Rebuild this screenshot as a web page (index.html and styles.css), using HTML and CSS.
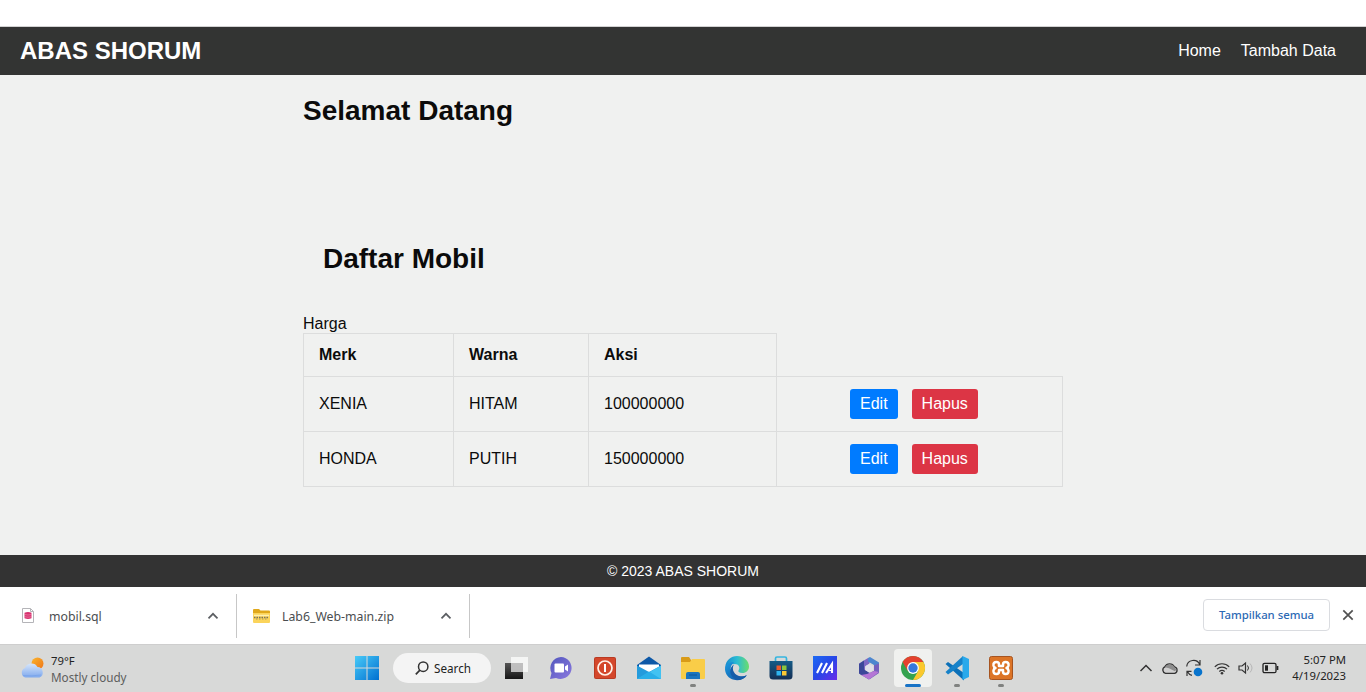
FILE: index.html
```html
<!DOCTYPE html>
<html lang="id">
<head>
<meta charset="utf-8">
<title>ABAS SHORUM</title>
<link rel="stylesheet" href="styles.css">
</head>
<body>
<div class="browser-edge"></div>
<header class="site-header">
  <div class="brand">ABAS SHORUM</div>
  <nav class="nav"><a>Home</a><a>Tambah Data</a></nav>
</header>
<main class="content">
  <h1 class="title">Selamat Datang</h1>
  <h2 class="subtitle">Daftar Mobil</h2>
  <div class="stray">Harga</div>
  <table class="cars">
    <colgroup><col class="c1"><col class="c2"><col class="c3"><col class="c4"></colgroup>
    <tr class="head"><th>Merk</th><th>Warna</th><th>Aksi</th></tr>
    <tr><td>XENIA</td><td>HITAM</td><td>100000000</td><td><div class="actions"><a class="btn edit">Edit</a><a class="btn delete">Hapus</a></div></td></tr>
    <tr><td>HONDA</td><td>PUTIH</td><td>150000000</td><td><div class="actions"><a class="btn edit">Edit</a><a class="btn delete">Hapus</a></div></td></tr>
  </table>
</main>
<footer class="site-footer">© 2023 ABAS SHORUM</footer>

<section class="downloads">
  <div class="download first">
    <svg class="file" width="12" height="15" viewBox="0 0 12 15"><path d="M.5.5h8l3 3v11H.5z" fill="#fff" stroke="#b4b4b8"/><path d="M8.500.500v3h3" fill="none" stroke="#b4b4b8"/><path d="M2.500 4.700q3.500-1.200 7 0v5.600q-3.500 1.200-7 0z" fill="#d8326f"/><path d="M2.500 6.500q3.500 1 7 0M2.500 8.700q3.500 1 7 0" fill="none" stroke="#f3a9c3" stroke-width=".5"/></svg>
    <span class="fname sql">mobil.sql</span>
    <svg class="caret" width="12" height="8" viewBox="0 0 12 8"><path d="M1.500 6.300 6 1.800l4.500 4.500" fill="none" stroke="#5b5e62" stroke-width="1.700"/></svg>
  </div>
  <div class="download second">
    <svg class="zip" width="17" height="14" viewBox="0 0 17 14"><path d="M0 1q0-1 1-1h5l1.500 1.500H16q1 0 1 1V5H0z" fill="#e0a81c"/><path d="M0 4h17v9q0 1-1 1H1q-1 0-1-1z" fill="#fbd45b"/><path d="M1 6.500h15" stroke="#fff0b0" stroke-width="1.500"/><path d="M1 8.500h15" stroke="#77735e" stroke-width="1.500" stroke-dasharray="1.500 1"/><path d="M3 10h12" stroke="#aa9855" stroke-dasharray="1.500 1.500"/></svg>
    <span class="fname zipname">Lab6_Web-main.zip</span>
    <svg class="caret" width="12" height="8" viewBox="0 0 12 8"><path d="M1.500 6.300 6 1.800l4.500 4.500" fill="none" stroke="#5b5e62" stroke-width="1.700"/></svg>
  </div>
  <div class="show-all"><span>Tampilkan semua</span></div>
  <svg class="close" width="12" height="12" viewBox="0 0 12 12"><path d="m1.300 1.300 9.400 9.400m0-9.400-9.400 9.400" stroke="#515151" stroke-width="1.700"/></svg>
</section>

<section class="taskbar">
  <div class="weather">
    <svg width="25" height="22" viewBox="0 0 25 22"><defs><linearGradient id="sun" x2="1" y2="1"><stop stop-color="#fbb52d"/><stop offset="1" stop-color="#ee7418"/></linearGradient><linearGradient id="cloud" x2="0" y2="1"><stop stop-color="#d5e5fb"/><stop offset="1" stop-color="#7fa9ed"/></linearGradient></defs><circle cx="17.500" cy="6.500" r="6" fill="url(#sun)"/><path d="M5.500 20.500A5 5 0 0 1 5 11a7 7 0 0 1 12.500-1 5.500 5.500 0 0 1 2 10.500z" fill="url(#cloud)"/><path d="M3 18.500q8 1 18-.5" stroke="#6c9ae8" fill="none" opacity=".5"/></svg>
    <div class="wtext"><span class="temp">79°F</span><span class="sky">Mostly cloudy</span></div>
  </div>
  <div class="start"><svg width="24" height="24" viewBox="0 0 24 24"><defs><linearGradient id="win" x2="1" y2="1"><stop stop-color="#48cbf8"/><stop offset="1" stop-color="#006fd0"/></linearGradient></defs><path d="M0 0h11.500v11.500H0zM12.500 0H24v11.500H12.500zM0 12.500h11.500V24H0zM12.500 12.500H24V24H12.500z" fill="url(#win)"/></svg></div>
  <div class="search"><svg width="14" height="14" viewBox="0 0 14 14"><circle cx="8.200" cy="5.700" r="4.700" fill="none" stroke="#333" stroke-width="1.500"/><path d="M4.900 9.200.8 13.300" stroke="#333" stroke-width="1.700"/></svg><span>Search</span></div>
  <div class="apps">
    <div class="app"><svg width="26" height="26" viewBox="0 0 26 26"><defs><linearGradient id="tv" x2="0" y2="1"><stop stop-color="#555"/><stop offset="1" stop-color="#161616"/></linearGradient></defs><path d="M1 8h18v16H1z" fill="url(#tv)"/><path d="M7 2h17v15H7z" fill="#fff" opacity=".72"/><path d="M7 8h12v9H7z" fill="#b9b9b9" opacity=".75"/></svg></div>
    <div class="app"><svg width="26" height="26" viewBox="0 0 26 26"><defs><linearGradient id="chat" x2="1" y2="1"><stop stop-color="#5156bd"/><stop offset="1" stop-color="#8b79df"/></linearGradient></defs><path d="M13 2a11 11 0 1 1-5 21l-6 1 1.500-6A11 11 0 0 1 13 2z" fill="url(#chat)"/><rect x="6.500" y="8.500" width="9.500" height="9" rx="1" fill="#fff"/><path d="m17 11.500 3-2v7l-3-2z" fill="#fff"/></svg></div>
    <div class="app"><svg width="26" height="26" viewBox="0 0 26 26"><rect x="2" y="2" width="22" height="22" rx="2" fill="#b93a22"/><rect x="3" y="3" width="20" height="20" rx="1" fill="#d4472b"/><circle cx="13" cy="13" r="7" fill="none" stroke="#fff1e8" stroke-width="1.700"/><path d="M13 9v8" stroke="#fff" stroke-width="2"/></svg></div>
    <div class="app"><svg width="26" height="26" viewBox="0 0 26 26"><path d="M1 10 13 1.500 25 10v8H1z" fill="#0c58a7"/><path d="M3 9.500h20V18H3z" fill="#fff"/><path d="M1 10.500 13 17l12-6.500V24H1z" fill="#249bdc"/><path d="M25 10.500 7 21l-6 3h24z" fill="#42c2f2"/><path d="m1 24 12-7.500L25 24z" fill="#2aaee8"/></svg></div>
    <div class="app running"><svg width="26" height="26" viewBox="0 0 26 26"><path d="M1 3q0-1 1-1h7l2 3v5H1z" fill="#d99b18"/><path d="M1 7h9l2-3h12q1 0 1 1v18q0 1-1 1H2q-1 0-1-1z" fill="#f9cd48"/><path d="M6 24v-5q0-2 2-2h10q2 0 2 2v5z" fill="#1b75bf"/><path d="M9 20h8" stroke="#0e579a"/></svg></div>
    <div class="app"><svg width="26" height="26" viewBox="0 0 26 26"><defs><linearGradient id="edge" x2="1" y2="0"><stop stop-color="#168acf"/><stop offset=".5" stop-color="#2bbcd3"/><stop offset="1" stop-color="#6bdd6c"/></linearGradient><linearGradient id="edge2" x2="1" y2="1"><stop stop-color="#1c9ae0"/><stop offset="1" stop-color="#0c4f9e"/></linearGradient></defs><path d="M1.200 12C2 5 7 1 13 1c7 0 12 5 12 10.500 0 4-3 6.500-6.500 6.500-3 0-4.700-1-4-2.500 2-3 .5-6.500-4-6.500-4 0-8 2-9.300 6z" fill="url(#edge)"/><path d="M1 14c1-5 5-7.500 9-6.500-3 2-4 5-3 8.500 1.400 5 8 7.500 15.500 4.500-3 4-8 5.500-12.500 4.300C4.500 23.500 1 19 1 14z" fill="url(#edge2)"/><path d="M10.500 9c-3 3-2 10 4.500 12 3 .8 6 .2 8-1-2 3.500-6 5.300-10 5C5 22 4 13 10.500 9z" fill="#145da9"/></svg></div>
    <div class="app"><svg width="26" height="26" viewBox="0 0 26 26"><defs><linearGradient id="store" x2="0" y2="1"><stop stop-color="#155b86"/><stop offset="1" stop-color="#142f55"/></linearGradient></defs><path d="M7.500 7V3.500q0-1.500 1.500-1.500h8q1.500 0 1.500 1.500V7" fill="none" stroke="#35b5df" stroke-width="1.700"/><path d="M1.500 6h23v15q0 3.500-3.500 3.500H5q-3.500 0-3.500-3.500z" fill="url(#store)"/><path d="M8.500 10.500H13V15H8.500z" fill="#ed5a2c"/><path d="M14 10.500h4.500V15H14z" fill="#8bc53d"/><path d="M8.500 16H13v4.500H8.500z" fill="#2eb4ef"/><path d="M14 16h4.500v4.500H14z" fill="#fbc934"/></svg></div>
    <div class="app"><svg width="26" height="26" viewBox="0 0 26 26"><defs><linearGradient id="my" x2="1" y2="1"><stop stop-color="#1c6bf4"/><stop offset=".5" stop-color="#2846e7"/><stop offset="1" stop-color="#6b2ce9"/></linearGradient></defs><path d="M1 1h24v24H1z" fill="url(#my)"/><path d="m5 18 5-10M10 18l5-10M14 18l6-9v9" stroke="#fff" stroke-width="2.100" fill="none"/><path d="M17 15.500h3" stroke="#fff"/></svg></div>
    <div class="app"><svg width="26" height="26" viewBox="0 0 26 26"><path d="M3 8.500 12 3l3 1-2 5-4 2.500v6L5 20l-2-2z" fill="#7d67c4"/><path d="m12 3 2-1 9 5.500V15l-5-2v-3l-6-3.500z" fill="#4c86cf"/><path d="M23 8.500V18l-9 6-5-2.500 9-5.500v-5.500z" fill="#7660bd"/><path d="m3 9 5-3.500v9L14 18l4-2v3l-5 5.500L3 18.500z" fill="#3c4799"/><path d="m5 20 6-1 7-3 5 1-10 7.500z" fill="#b576d5"/><path d="m9.500 11 3.500-2 4 2v4l-4 2.500L9.500 15z" fill="#e1dfeb"/></svg></div>
    <div class="app active"><svg width="26" height="26" viewBox="0 0 26 26"><circle cx="13" cy="13" r="12" fill="#34a24f"/><path d="M2.600 7A12 12 0 0 1 23.400 7H13l-5.200 9z" fill="#e4412f"/><path d="M23.400 7A12 12 0 0 1 13 25l5.200-9L13 7z" fill="#fbc82e"/><circle cx="13" cy="13" r="5.900" fill="#fff"/><circle cx="13" cy="13" r="4.700" fill="#3577dc"/></svg></div>
    <div class="app running"><svg width="26" height="26" viewBox="0 0 26 26"><path d="m1.500 9 2.500-2L20 18v7.500z" fill="#0b70b8"/><path d="M19 1v8L4 19.500 1.500 17z" fill="#1682c9"/><path d="m18.500 1 6.500 3v18l-6.500 3z" fill="#2aa9eb"/></svg></div>
    <div class="app running"><svg width="26" height="26" viewBox="0 0 26 26"><rect x="1.500" y="1.500" width="23" height="23" rx="2" fill="#dc7426" stroke="#a65420"/><path d="M8.500 7q-3.500 0-3 3.500.3 1.800 2 2.500-1.700.7-2 2.500-.5 3.500 3 3.500 2.500 0 2.500-2.500V15h4v1.500q0 2.500 2.500 2.500 3.500 0 3-3.500-.3-1.800-2-2.500 1.700-.7 2-2.500.5-3.500-3-3.500Q15 7 15 9.500V11h-4V9.500Q11 7 8.500 7z" fill="none" stroke="#fff" stroke-width="2.500" stroke-linejoin="round"/></svg></div>
  </div>
  <div class="tray">
    <svg class="up" width="14" height="8" viewBox="0 0 14 8"><path d="m1.500 7 5.500-5.500L12.500 7" fill="none" stroke="#333" stroke-width="1.500"/></svg>
    <svg class="onedrive" width="18" height="13" viewBox="0 0 18 13"><path d="M4.500 11.300a3.400 3.400 0 0 1-.7-6.400 5.300 5.300 0 0 1 9.600 0 3.300 3.300 0 0 1 .3 6.400z" fill="#d0d0d0" stroke="#333" stroke-width="1.300"/><path d="M4 5.300a5.300 5.300 0 0 1 9.500 0l2 2-1.500 2-6-3z" fill="#8d8d8d"/></svg>
    <svg class="sync" width="18" height="18" viewBox="0 0 18 18"><path d="M1.700 7.500a6.800 6.800 0 0 1 13-2M15 1v5h-5M7 16.300a6.500 6.500 0 0 1-4.500-3.500M2 17v-4.700h4.500" fill="none" stroke="#333" stroke-width="1.200"/><circle cx="13" cy="13" r="4.300" fill="#0874cd"/></svg>
    <svg class="wifi" width="16" height="13" viewBox="0 0 16 13"><path d="M.8 4.800a10 10 0 0 1 14.400 0M3 7.200a7 7 0 0 1 10 0M5.300 9.500a4 4 0 0 1 5.400 0" fill="none" stroke="#333" stroke-width="1.200"/><circle cx="8" cy="11.300" r="1.300" fill="#333"/></svg>
    <svg class="sound" width="17" height="14" viewBox="0 0 17 14"><path d="M1 5h3l3.500-3v10L4 9H1z" fill="none" stroke="#333" stroke-width="1.200"/><path d="M9.500 4.500q2 2.500 0 5" fill="none" stroke="#333"/><path d="M12 2.500q4 4.500 0 9" fill="none" stroke="#b6b6b6"/></svg>
    <svg class="battery" width="17" height="12" viewBox="0 0 17 12"><rect x="1" y="1.300" width="13" height="9.400" rx="1.500" fill="none" stroke="#222" stroke-width="1.300"/><path d="M3 3.300h3v5.400H3z" fill="#222"/><path d="M15.500 4v4" stroke="#222" stroke-width="1.700"/></svg>
    <div class="clock"><span class="time">5:07 PM</span><span class="date">4/19/2023</span></div>
  </div>
</section>
</body>
</html>
```
FILE: styles.css
```css
* { box-sizing: border-box; }
body { margin: 0; width: 1366px; height: 692px; overflow: hidden; display: flex; flex-direction: column; background: #f0f1f0; color: #0b0b0b; font: 16px/18px "Liberation Sans", Arial, sans-serif; }
svg { display: block; flex: none; }
span, a { white-space: nowrap; }
.browser-edge { height: 27px; background: #fff; border-bottom: 1px solid #d2d2d2; flex: none; }
.site-header { height: 48px; flex: none; display: flex; justify-content: space-between; align-items: center; padding: 0 30px 0 20px; background: #333433; color: #fff; }
.brand { font-size: 24px; line-height: 28px; font-weight: bold; }
.nav { display: flex; gap: 20px; }
.content { height: 480px; flex: none; padding: 20px 303px 0; }
.title, .subtitle { margin: 0; font-size: 28px; line-height: 32px; font-weight: bold; }
.subtitle { margin: 116px 0 0 20px; }
.stray { margin-top: 40px; height: 18px; }
.cars { table-layout: fixed; width: 760px; border-collapse: collapse; }
.c1 { width: 150px; }
.c2 { width: 135px; }
.c3 { width: 188px; }
.c4 { width: 286px; }
.cars tr { height: 55px; }
.cars .head { height: 43px; }
.cars th, .cars td { border: 1px solid #dcdddd; padding: 0 15px; text-align: left; }
.actions { display: flex; gap: 14px; padding-left: 58px; }
.btn { height: 30px; padding: 6px 10px; border-radius: 3px; color: #fff; }
.edit { background: #007bff; }
.delete { background: #dc3545; }
.site-footer { height: 32px; flex: none; background: #333; color: #fff; font-size: 14px; line-height: 32px; text-align: center; }
.downloads { height: 57px; flex: none; display: flex; align-items: center; background: #fff; color: #4a4d50; font: 12.300px/18px "Noto Sans", sans-serif; }
.download { height: 44px; display: flex; align-items: center; border-right: 1px solid #c7c7c7; }
.first { width: 237px; padding-left: 22px; }
.second { width: 233px; padding-left: 16px; }
.sql { margin-left: 15px; }
.zipname { margin-left: 12px; }
.fname { padding-top: 2px; }
.caret { margin: 1px 17px 0 auto; }
.show-all { width: 127px; height: 32px; margin: -2px 0 0 auto; border: 1px solid #dadce0; border-radius: 4px; display: flex; align-items: center; justify-content: center; color: #2c69b4; font-size: 11.350px; font-weight: 500; }
.close { margin: -2px 12px 0 12px; }
.taskbar { height: 48px; flex: none; display: flex; align-items: center; padding-bottom: 1px; background: #d8d9d8; border-top: 1px solid #cecece; font: 11.700px/16px "Noto Sans", sans-serif; }
.weather { width: 344px; display: flex; align-items: center; padding-left: 20px; }
.wtext { display: flex; flex-direction: column; margin: 1px 0 0 6px; }
.temp { font-size: 11.300px; color: #222; }
.sky { color: #5d5e5d; }
.start { width: 45px; display: flex; justify-content: center; }
.search { width: 98px; height: 30px; margin-left: 4px; border-radius: 15px; background: #f4f4f4; display: flex; align-items: center; gap: 5px; padding-left: 22px; color: #222; }
.search span { padding-bottom: 1px; }
.apps { display: flex; margin-left: 4px; }
.app { position: relative; width: 44px; height: 38px; display: flex; align-items: center; justify-content: center; }
.running::after { content: ""; position: absolute; left: 19px; bottom: 0; width: 6px; height: 3px; border-radius: 2px; background: #808280; }
.active { width: 38px; margin: 0 3px; background: #f0f1ef; border-radius: 4px; }
.active::after { content: ""; position: absolute; left: 11px; bottom: 0; width: 16px; height: 3px; border-radius: 2px; background: #1873c6; }
.tray { margin-left: auto; display: flex; align-items: center; padding-right: 20px; color: #222; }
.onedrive { margin-left: 8px; }
.sync { margin-left: 6px; }
.wifi { margin-left: 11px; }
.sound { margin-left: 8px; }
.battery { margin-left: 7px; }
.clock { width: 67px; display: flex; flex-direction: column; align-items: flex-end; font-size: 11.300px; }
```
